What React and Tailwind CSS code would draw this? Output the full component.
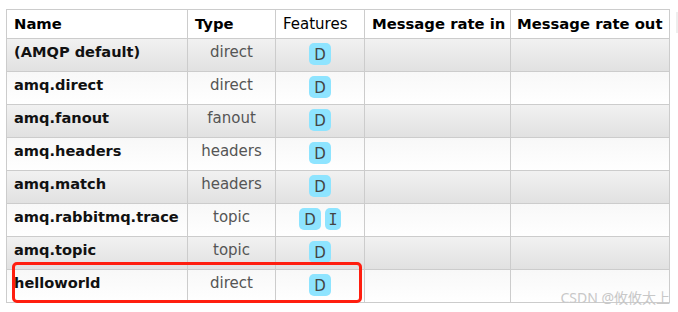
import React from 'react'

const exchanges = [
  { name: '(AMQP default)', type: 'direct', features: ['D'] },
  { name: 'amq.direct', type: 'direct', features: ['D'] },
  { name: 'amq.fanout', type: 'fanout', features: ['D'] },
  { name: 'amq.headers', type: 'headers', features: ['D'] },
  { name: 'amq.match', type: 'headers', features: ['D'] },
  { name: 'amq.rabbitmq.trace', type: 'topic', features: ['D', 'I'] },
  { name: 'amq.topic', type: 'topic', features: ['D'] },
  { name: 'helloworld', type: 'direct', features: ['D'] },
]

function Badge({label}){
  // the serif "I" reads like the Verdana glyph
  const mono = label === 'I'
  return (
    <span className={'inline-block h-[22px] rounded-[5px] bg-[#8ee4ff] text-[#444] leading-[24px] ' + (mono ? 'w-[16px] text-center' : 'w-[22px] text-center')}
      style={mono ? {fontFamily: '"DejaVu Sans Mono", monospace'} : undefined}>{label}</span>
  )
}

export default function App(){
  return (
    <div className="relative w-[678px] h-[312px] bg-white overflow-hidden" style={{fontFamily: '"DejaVu Sans", Verdana, sans-serif'}}>
      <div className="flex items-start pt-[9px] pl-[6px]">
        <table className="border-collapse text-[15px] table-fixed w-[663px]">
          <colgroup>
            <col className="w-[181px]" />
            <col className="w-[88px]" />
            <col className="w-[89px]" />
            <col className="w-[146px]" />
            <col className="w-[159px]" />
          </colgroup>
          <thead>
            <tr className="h-[29px] bg-white">
              <th className="border border-[#ccc] text-left font-bold px-[7px] leading-[18px] text-[14.8px]">Name</th>
              <th className="border border-[#ccc] text-left font-bold px-[7px] leading-[18px] text-[14.8px]">Type</th>
              <th className="border border-[#ccc] text-left font-normal pl-[7px] leading-[18px]">Features</th>
              <th className="border border-[#ccc] text-left font-bold px-[7px] leading-[18px] text-[14.8px] whitespace-nowrap">Message rate in</th>
              <th className="border border-[#ccc] text-left font-bold px-[6px] leading-[18px] text-[14.8px] whitespace-nowrap">Message rate out</th>
            </tr>
          </thead>
          <tbody>
            {exchanges.map((x, i) => (
              <tr key={x.name} className={'h-[33px] ' + (i % 2 === 0 ? 'bg-gradient-to-b from-[#f1f1f1] to-[#e1e1e1]' : 'bg-gradient-to-b from-[#f8f8f8] to-white')}>
                <td className="border border-[#ccc] align-top pt-[4px] px-[7px] font-bold text-[14.6px] text-[#111] leading-[18px] whitespace-nowrap">{x.name}</td>
                <td className="border border-[#ccc] align-top pt-[4px] text-center text-[#555] leading-[18px]">{x.type}</td>
                <td className="border border-[#ccc] align-top pt-[4px] text-center">
                  <div className="flex justify-center gap-[4px]">
                    {x.features.map(f => <Badge key={f} label={f} />)}
                  </div>
                </td>
                <td className="border border-[#ccc]"></td>
                <td className="border border-[#ccc]"></td>
              </tr>
            ))}
          </tbody>
        </table>
        <div className="ml-[6px] mt-[3px] w-[4px] h-[21px] bg-[#eee]"></div>
      </div>

      {/* highlight around the new exchange */}
      <div className="absolute left-[12px] top-[262px] w-[350px] h-[41px] border-[3px] border-[#ff1e0f] rounded-[5px]"></div>

      <div className="absolute right-[8px] bottom-[4px] text-[14px] text-[#c8c8c8]" style={{fontFamily: '"Noto Sans", "Noto Sans CJK SC", sans-serif'}}>CSDN @攸攸太上</div>
    </div>
  )
}
